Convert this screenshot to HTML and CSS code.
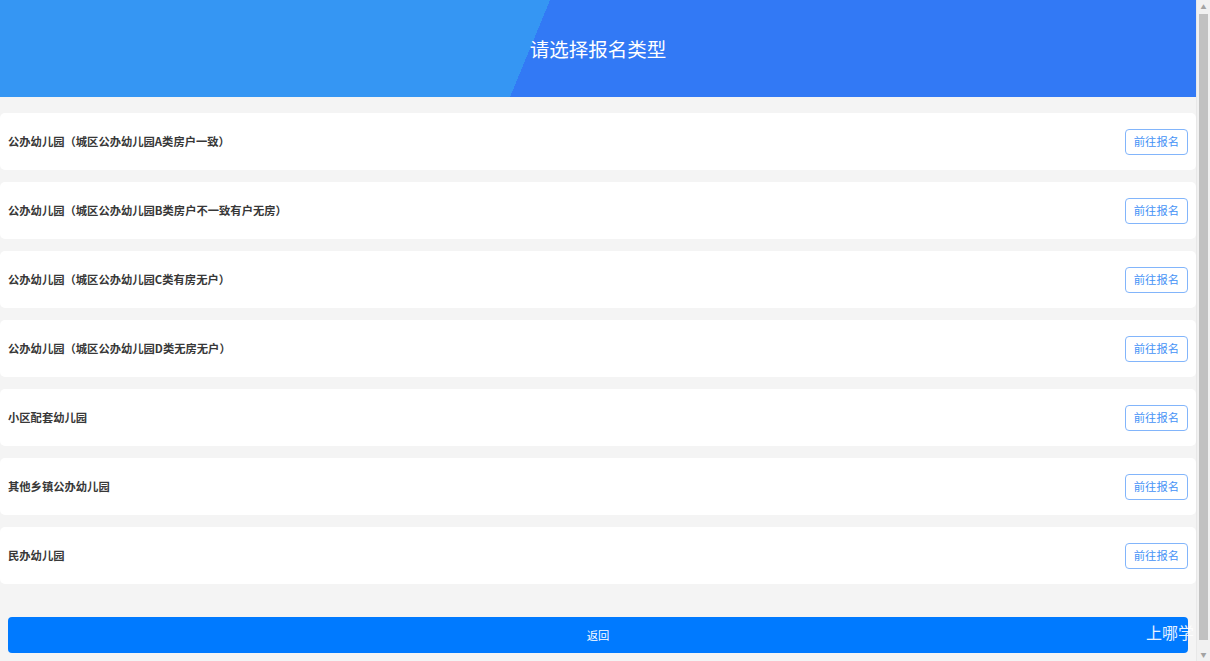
FILE: index.html
```html
<!doctype html>
<html lang="zh-CN">

<head>
    <meta charset="UTF-8">
    <meta name="viewport" content="width=device-width, initial-scale=1.0">
    <title>请选择报名类型</title>
    <link rel="stylesheet" href="styles.css">
</head>

<body>
    <main class="page">
        <header class="page--header">
            <h1 class="page--title">请选择报名类型</h1>
        </header>

        <section class="type--list">
            <div class="type--item">
                <span class="type--name">公办幼儿园（城区公办幼儿园A类房户一致）</span>
                <button class="type--btn">前往报名</button>
            </div>
            <div class="type--item">
                <span class="type--name">公办幼儿园（城区公办幼儿园B类房户不一致有户无房）</span>
                <button class="type--btn">前往报名</button>
            </div>
            <div class="type--item">
                <span class="type--name">公办幼儿园（城区公办幼儿园C类有房无户）</span>
                <button class="type--btn">前往报名</button>
            </div>
            <div class="type--item">
                <span class="type--name">公办幼儿园（城区公办幼儿园D类无房无户）</span>
                <button class="type--btn">前往报名</button>
            </div>
            <div class="type--item">
                <span class="type--name">小区配套幼儿园</span>
                <button class="type--btn">前往报名</button>
            </div>
            <div class="type--item">
                <span class="type--name">其他乡镇公办幼儿园</span>
                <button class="type--btn">前往报名</button>
            </div>
            <div class="type--item">
                <span class="type--name">民办幼儿园</span>
                <button class="type--btn">前往报名</button>
            </div>
        </section>

        <div class="page--footer">
            <button class="back--btn">返回</button>
            <div class="watermark">上哪学</div>
        </div>
    </main>

    <!-- window scrollbar -->
    <aside class="scrollbar">
        <span class="scrollbar--arrow">&#9650;</span>
        <span class="scrollbar--thumb"></span>
        <span class="scrollbar--arrow">&#9660;</span>
    </aside>
</body>

</html>
```

FILE: styles.css
```css
body {
    margin: 0;
    height: 100vh;
    display: flex;
    overflow: hidden;
    background-color: #f4f4f4;
    font-family: "Noto Sans CJK SC", "Noto Sans", sans-serif;
    color: #333333;
}

.page {
    flex: 1;
    min-width: 0;
}

.page--header {
    height: 97px;
    display: flex;
    align-items: center;
    justify-content: center;
    background: linear-gradient(112.4deg, #3596f3 44.5%, #3279f5 44.5%);
}

.page--title {
    margin: 0;
    font-size: 19.5px;
    font-weight: normal;
    color: #ffffff;
}

.type--list {
    display: flex;
    flex-direction: column;
    gap: 12px;
    padding-top: 16px;
}

.type--item {
    height: 57px;
    display: flex;
    align-items: center;
    justify-content: space-between;
    padding: 0 8px;
    background-color: #ffffff;
    border-radius: 5px;
}

.type--name {
    padding-bottom: 2px;
    font-size: 11.3px;
    font-weight: bold;
    color: #383838;
}

.type--btn {
    height: 26px;
    padding: 0 8px 1px;
    font-family: inherit;
    font-size: 11.3px;
    color: #4592f6;
    background-color: #ffffff;
    border: 1px solid #82b5fb;
    border-radius: 4px;
    cursor: pointer;
}

.page--footer {
    position: relative;
    padding: 33px 8px 30px;
}

.back--btn {
    display: block;
    width: 100%;
    height: 36px;
    padding-bottom: 2px;
    font-family: inherit;
    font-size: 11.3px;
    color: #ffffff;
    background-color: #007aff;
    border: none;
    border-radius: 4px;
    cursor: pointer;
}

.watermark {
    position: absolute;
    right: 2px;
    top: 36px;
    font-size: 16px;
    color: #ffffff;
    opacity: 0.9;
}

.scrollbar {
    width: 13px;
    display: flex;
    flex-direction: column;
    align-items: center;
    background-color: #f1f1f1;
    border-left: 1px solid #e8e8e8;
}

.scrollbar--arrow {
    height: 13px;
    font-size: 6px;
    line-height: 13px;
    color: #a3a3a3;
}

.scrollbar--thumb {
    flex: 1;
    width: 9px;
    margin: 1px 0 8px;
    background-color: #c1c1c1;
}
```
